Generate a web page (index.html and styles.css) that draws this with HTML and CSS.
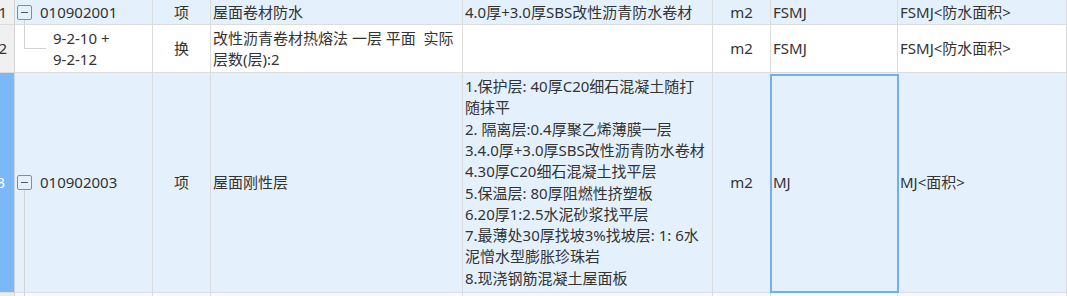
FILE: index.html
```html
<!DOCTYPE html>
<html lang="zh-CN">
<head>
<meta charset="utf-8">
<title>清单</title>
<link rel="stylesheet" href="styles.css">
</head>
<body>
<div class="grid">
  <!-- row 1 -->
  <div class="cell num r1"><span>1</span></div>
  <div class="cell code r1"><span class="tbox"></span><span class="vline from-box"></span><span class="ctext">010902001</span></div>
  <div class="cell mid r1">项</div>
  <div class="cell r1">屋面卷材防水</div>
  <div class="cell r1">4.0厚+3.0厚SBS改性沥青防水卷材</div>
  <div class="cell mid r1">m2</div>
  <div class="cell r1">FSMJ</div>
  <div class="cell r1">FSMJ&lt;防水面积&gt;</div>

  <!-- row 2 -->
  <div class="cell num r2"><span>2</span></div>
  <div class="cell code r2"><span class="elbow"></span><span class="ctext sub">9-2-10 +<br>9-2-12</span></div>
  <div class="cell mid r2">换</div>
  <div class="cell r2">改性沥青卷材热熔法 一层 平面&nbsp; 实际<br>层数(层):2</div>
  <div class="cell r2"></div>
  <div class="cell mid r2">m2</div>
  <div class="cell r2">FSMJ</div>
  <div class="cell r2">FSMJ&lt;防水面积&gt;</div>

  <!-- row 3 -->
  <div class="cell num r3 active"><span>3</span></div>
  <div class="cell code r3"><span class="tbox"></span><span class="vline from-box"></span><span class="ctext">010902003</span></div>
  <div class="cell mid r3">项</div>
  <div class="cell r3">屋面刚性层</div>
  <div class="cell r3 desc">1.保护层: 40厚C20细石混凝土随打<br>随抹平<br>2. 隔离层:0.4厚聚乙烯薄膜一层<br>3.4.0厚+3.0厚SBS改性沥青防水卷材<br>4.30厚C20细石混凝土找平层<br>5.保温层: 80厚阻燃性挤塑板<br>6.20厚1:2.5水泥砂浆找平层<br>7.最薄处30厚找坡3%找坡层: 1: 6水<br>泥憎水型膨胀珍珠岩<br>8.现浇钢筋混凝土屋面板</div>
  <div class="cell mid r3">m2</div>
  <div class="cell r3 selected">MJ</div>
  <div class="cell r3">MJ&lt;面积&gt;</div>

  <!-- row 4 (partial) -->
  <div class="cell num r4"></div>
  <div class="cell code r4"><span class="vline full"></span></div>
  <div class="cell r4"></div>
  <div class="cell r4"></div>
  <div class="cell r4"></div>
  <div class="cell r4"></div>
  <div class="cell r4"></div>
  <div class="cell r4"></div>
</div>
</body>
</html>
```

FILE: styles.css
```css
html, body {
  margin: 0;
  padding: 0;
  background: #ffffff;
}

body {
  width: 1067px;
  height: 296px;
  overflow: hidden;
  font-family: "Noto Sans", "Noto Sans CJK SC", sans-serif;
  font-size: 15px;
  color: #333333;
}

.grid {
  display: grid;
  grid-template-columns: 15px 138px 58px 252px 250px 58px 127px 1fr;
  grid-template-rows: 25px 48px 220px 3px;
}

.cell {
  box-sizing: border-box;
  border-right: 1px solid #dcdcdc;
  border-bottom: 1px solid #dcdcdc;
  padding: 0 2px;
  display: flex;
  align-items: center;
  line-height: 21px;
  white-space: nowrap;
  overflow: hidden;
  position: relative;
}

.r1, .r3 { background: #e4f1fd; }
.r2 { background: #ffffff; }
.r4 { background: #f7f9fb; border-bottom: none; }

.mid { justify-content: center; }

.num {
  background: #f0f0f0;
  border-right-color: #d4d4d4;
  justify-content: flex-end;
  padding: 0 7px 0 0;
}
.num span { display: block; }
.num.active {
  background: #7cb8f6;
  color: #ffffff;
  padding-right: 9px;
}
.num.r4 { background: #ececec; }

.desc {
  line-height: 21.3px;
}

.code { padding-left: 2px; }

.tbox {
  box-sizing: border-box;
  width: 15px;
  height: 15px;
  border: 1px solid #8c8c8c;
  border-radius: 2px;
  position: relative;
  flex: none;
  z-index: 1;
}
.tbox::after {
  content: "";
  position: absolute;
  left: 3px;
  right: 3px;
  top: 6px;
  height: 1px;
  background: #555555;
}

.ctext { margin-left: 8px; }
.ctext.sub { margin-left: 36px; }

.vline {
  position: absolute;
  left: 9px;
  width: 1px;
  background: #d2d2d2;
}
.vline.from-box { top: calc(50% + 7px); bottom: -1px; }
.vline.full { top: 0; bottom: 0; }

.elbow {
  position: absolute;
  left: 9px;
  top: 0;
  height: 23px;
  width: 21px;
  border-left: 1px solid #d2d2d2;
  border-bottom: 1px solid #d2d2d2;
}

.selected {
  overflow: visible;
  z-index: 2;
}
.selected::after {
  content: "";
  position: absolute;
  top: 1px;
  left: -1px;
  right: -2px;
  bottom: -1px;
  border: 2px solid #6fb0ef;
  pointer-events: none;
}
```
